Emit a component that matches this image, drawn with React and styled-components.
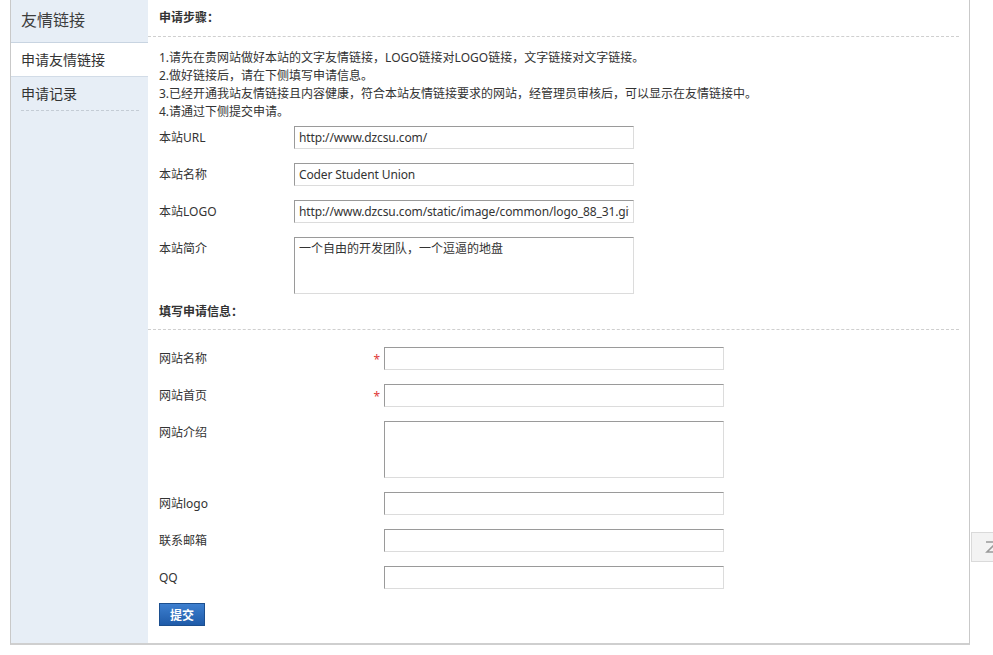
import styled, { createGlobalStyle } from "styled-components";

const GlobalStyle = createGlobalStyle`
  html, body {
    margin: 0;
    padding: 0;
    background: #fff;
    overflow: hidden;
  }
  body {
    font-family: "Noto Sans", "Noto Sans CJK SC", sans-serif;
    font-size: 12px;
    color: #333;
  }
`;

const Frame = styled.div`
  display: flex;
  width: 958px;
  margin-left: 10px;
  border-left: 1px solid #c9c9c9;
  border-right: 1px solid #c9c9c9;
  border-bottom: 2px solid #cfcfcf;
`;

const Sidebar = styled.div`
  width: 137px;
  flex-shrink: 0;
  background: #e7eef6;
`;

const SideTitle = styled.div`
  height: 42px;
  line-height: 40px;
  padding-left: 10px;
  font-size: 16px;
  color: #3d3d3d;
  border-bottom: 1px solid #c8d4e1;
`;

const SideItem = styled.div`
  height: 33px;
  line-height: 33px;
  padding-left: 10px;
  font-size: 14px;
  color: #333;
  background: ${(p) => (p.$active ? "#fff" : "transparent")};
  border-bottom: 1px solid ${(p) => (p.$active ? "#d2dce7" : "transparent")};
`;

const SideLast = styled.div`
  margin: 0 9px 0 10px;
  height: 33px;
  line-height: 33px;
  font-size: 14px;
  color: #333;
  border-bottom: 1px dashed #c4ccd5;
`;

const Main = styled.div`
  flex: 1;
  padding: 0 10px 17px 0;
`;

const Heading = styled.h3`
  margin: 0;
  height: ${(p) => p.$h || 35}px;
  line-height: ${(p) => p.$h || 35}px;
  padding-left: 11px;
  font-size: 12px;
  font-weight: bold;
  color: #333;
  border-bottom: 1px dashed #cfcfcf;
`;

const Steps = styled.div`
  padding: 12px 0 0 11px;
  line-height: 18px;
  margin-bottom: 5px;
`;

const Form = styled.div`
  padding-left: 11px;
  padding-top: ${(p) => p.$top || 0}px;
  display: flex;
  flex-direction: column;
  gap: 14px;
`;

const Row = styled.div`
  display: flex;
  align-items: flex-start;
`;

const Label = styled.div`
  width: ${(p) => p.$w}px;
  height: 23px;
  flex-shrink: 0;
  line-height: 23px;
  display: flex;
  justify-content: space-between;
`;

const Star = styled.span`
  position: relative;
  top: 1px;
  color: #e03a3a;
  margin-right: 4px;
  font-size: 12px;
`;

const Input = styled.input`
  box-sizing: border-box;
  width: 340px;
  height: 23px;
  margin: 0;
  padding: 0 4px;
  font-family: "Noto Sans", "Noto Sans CJK SC", sans-serif;
  font-size: 12px;
  letter-spacing: -0.12px;
  color: #333;
  border: 1px solid;
  border-color: #9a9a9a #dcdcdc #dcdcdc #9a9a9a;
  background: #fff;
  outline: none;
`;

const TextArea = styled.textarea`
  box-sizing: border-box;
  width: 340px;
  height: 57px;
  margin: 0;
  padding: 2px 4px;
  resize: none;
  font-family: "Noto Sans", "Noto Sans CJK SC", sans-serif;
  font-size: 12px;
  line-height: 18px;
  color: #333;
  border: 1px solid;
  border-color: #9a9a9a #dcdcdc #dcdcdc #9a9a9a;
  background: #fff;
  outline: none;
  overflow: hidden;
`;

const SubmitButton = styled.button`
  align-self: flex-start;
  width: 46px;
  height: 23px;
  padding: 0;
  border: 1px solid #1c4f8f;
  background: linear-gradient(#3d7fcf, #1f5ba9);
  color: #fff;
  font-family: "Noto Sans CJK SC", sans-serif;
  font-size: 12px;
  font-weight: bold;
  cursor: pointer;
`;

const SideTab = styled.div`
  position: fixed;
  left: 971px;
  top: 532px;
  width: 40px;
  height: 30px;
  box-sizing: border-box;
  background: #f3f3f3;
  border: 1px solid #dadada;
  display: flex;
  align-items: center;
  padding-left: 13px;
`;

const steps = [
  "1.请先在贵网站做好本站的文字友情链接，LOGO链接对LOGO链接，文字链接对文字链接。",
  "2.做好链接后，请在下侧填写申请信息。",
  "3.已经开通我站友情链接且内容健康，符合本站友情链接要求的网站，经管理员审核后，可以显示在友情链接中。",
  "4.请通过下侧提交申请。",
];

const siteFields = [
  { label: "本站URL", value: "http://www.dzcsu.com/" },
  { label: "本站名称", value: "Coder Student Union" },
  { label: "本站LOGO", value: "http://www.dzcsu.com/static/image/common/logo_88_31.gif" },
];

const applyFields = [
  { label: "网站名称", required: true },
  { label: "网站首页", required: true },
  { label: "网站介绍", area: true },
  { label: "网站logo" },
  { label: "联系邮箱" },
  { label: "QQ" },
];

const App = () => {
  return (
    <>
      <GlobalStyle />
      <Frame>
        <Sidebar>
          <SideTitle>友情链接</SideTitle>
          <SideItem $active>申请友情链接</SideItem>
          <SideLast>申请记录</SideLast>
        </Sidebar>
        <Main>
          <Heading $h={36}>申请步骤：</Heading>
          <Steps>
            {steps.map((s) => (
              <div key={s}>{s}</div>
            ))}
          </Steps>
          <Form>
            {siteFields.map((f) => (
              <Row key={f.label}>
                <Label $w={135}>{f.label}</Label>
                <Input defaultValue={f.value} readOnly />
              </Row>
            ))}
            <Row>
              <Label $w={135}>本站简介</Label>
              <TextArea defaultValue="一个自由的开发团队，一个逗逼的地盘" readOnly />
            </Row>
          </Form>
          <Heading>填写申请信息：</Heading>
          <Form $top={17}>
            {applyFields.map((f) => (
              <Row key={f.label}>
                <Label $w={225}>
                  <span>{f.label}</span>
                  {f.required && <Star>*</Star>}
                </Label>
                {f.area ? <TextArea /> : <Input />}
              </Row>
            ))}
            <SubmitButton type="button">提交</SubmitButton>
          </Form>
        </Main>
      </Frame>
      <SideTab>
        <svg width="14" height="14" viewBox="0 0 14 14" fill="none">
          <path d="M1 2h11L2 12h11" stroke="#9a9a9a" strokeWidth="1.6" />
        </svg>
      </SideTab>
    </>
  );
};

export default App;
